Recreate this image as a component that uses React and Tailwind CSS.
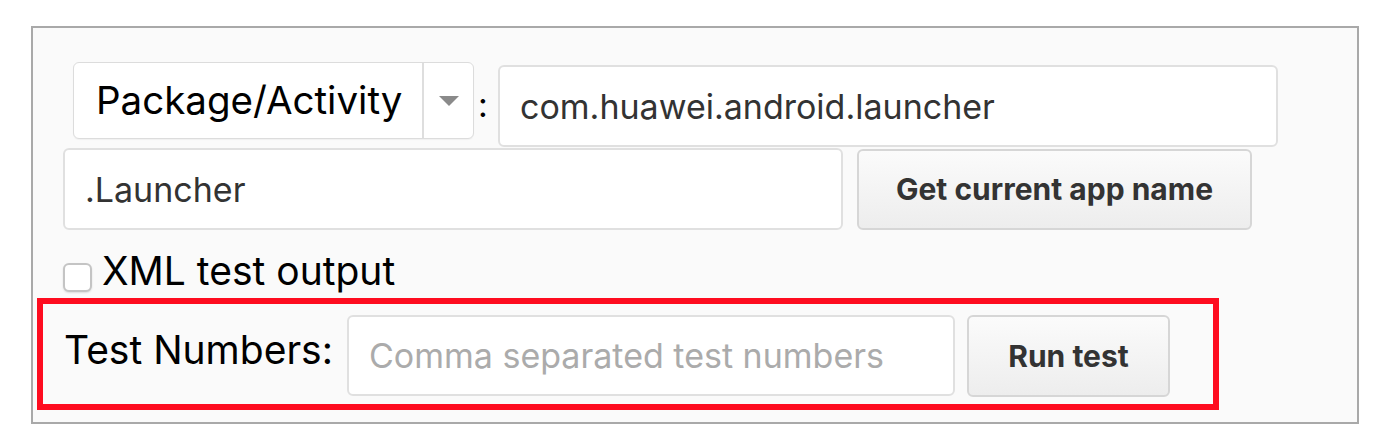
import { useState } from "react";

const font = { fontFamily: "Inter, 'Liberation Sans', sans-serif" };

export default function App() {
  const [pkg, setPkg] = useState("com.huawei.android.launcher");
  const [activity, setActivity] = useState(".Launcher");
  const [xml, setXml] = useState(false);
  const [numbers, setNumbers] = useState("");

  return (
    <div className="h-[448px] w-[1380px] bg-white pl-[31px] pt-[26px]" style={font}>
      <div className="h-[398px] w-[1328px] border-2 border-[#a9a9a9] bg-[#fafafa] pt-[34px]">
        <div className="flex items-start pl-[40px]">
          <div className="flex h-[77px] w-[401px] rounded-[6px] border border-[#dcdcdc] bg-white shadow-[0_1px_1px_rgba(0,0,0,0.04)]">
            <div className="flex flex-1 items-center pl-[22px] text-[38.5px] text-black">
              Package/Activity
            </div>
            <div className="flex w-[51px] items-center justify-center border-l-2 border-[#dedede]">
              <svg width="20" height="10" viewBox="0 0 20 10">
                <path d="M0 0 L20 0 L10 10 Z" fill="#8a8a8a" />
              </svg>
            </div>
          </div>
          <span className="mt-[26px] w-[24px] pl-[4px] text-[34px] leading-none text-black">:</span>
          <input
            value={pkg}
            onChange={(e) => setPkg(e.target.value)}
            className="mt-[3px] h-[82px] w-[780px] rounded-[6px] border-2 border-[#e0e0e0] bg-white px-[20px] text-[34px] text-[#333] outline-none"
          />
        </div>

        <div className="mt-px flex items-start pl-[30px]">
          <input
            value={activity}
            onChange={(e) => setActivity(e.target.value)}
            className="h-[82px] w-[780px] rounded-[6px] border-2 border-[#e0e0e0] bg-white px-[20px] text-[34px] text-[#333] outline-none"
          />
          <button className="ml-[14px] mt-px h-[81px] w-[395px] rounded-[6px] border-2 border-[#d6d6d6] bg-gradient-to-b from-[#fbfbfb] to-[#ededed] text-[30px] font-bold text-[#333]">
            Get current app name
          </button>
        </div>

        <label className="mt-[33px] flex h-[29px] items-start pl-[30px]">
          <input
            type="checkbox"
            checked={xml}
            onChange={(e) => setXml(e.target.checked)}
            className="h-[29px] w-[29px] appearance-none rounded-[6px] border-2 border-[#c4c4c4] bg-white shadow-[0_1px_2px_rgba(0,0,0,0.12)]"
          />
          <span className="-mt-[7px] ml-[10px] text-[39px] leading-[29px] text-black">XML test output</span>
        </label>

        <div className="ml-[4px] mt-[6px] flex h-[112px] w-[1182px] items-start border-[6px] border-[#fe0c1f] pl-[21px] pt-[11px]">
          <span className="mt-[15px] w-[283px] text-[39px] leading-none text-black">Test Numbers:</span>
          <input
            value={numbers}
            onChange={(e) => setNumbers(e.target.value)}
            placeholder="Comma separated test numbers"
            className="h-[81px] w-[608px] rounded-[6px] border-2 border-[#e0e0e0] bg-white px-[20px] text-[34px] text-[#333] outline-none placeholder:text-[#ababab]"
          />
          <button className="ml-[12px] h-[82px] w-[203px] rounded-[6px] border-2 border-[#d6d6d6] bg-gradient-to-b from-[#fbfbfb] to-[#ededed] text-[30px] font-bold text-[#333]">
            Run test
          </button>
        </div>
      </div>
    </div>
  );
}
